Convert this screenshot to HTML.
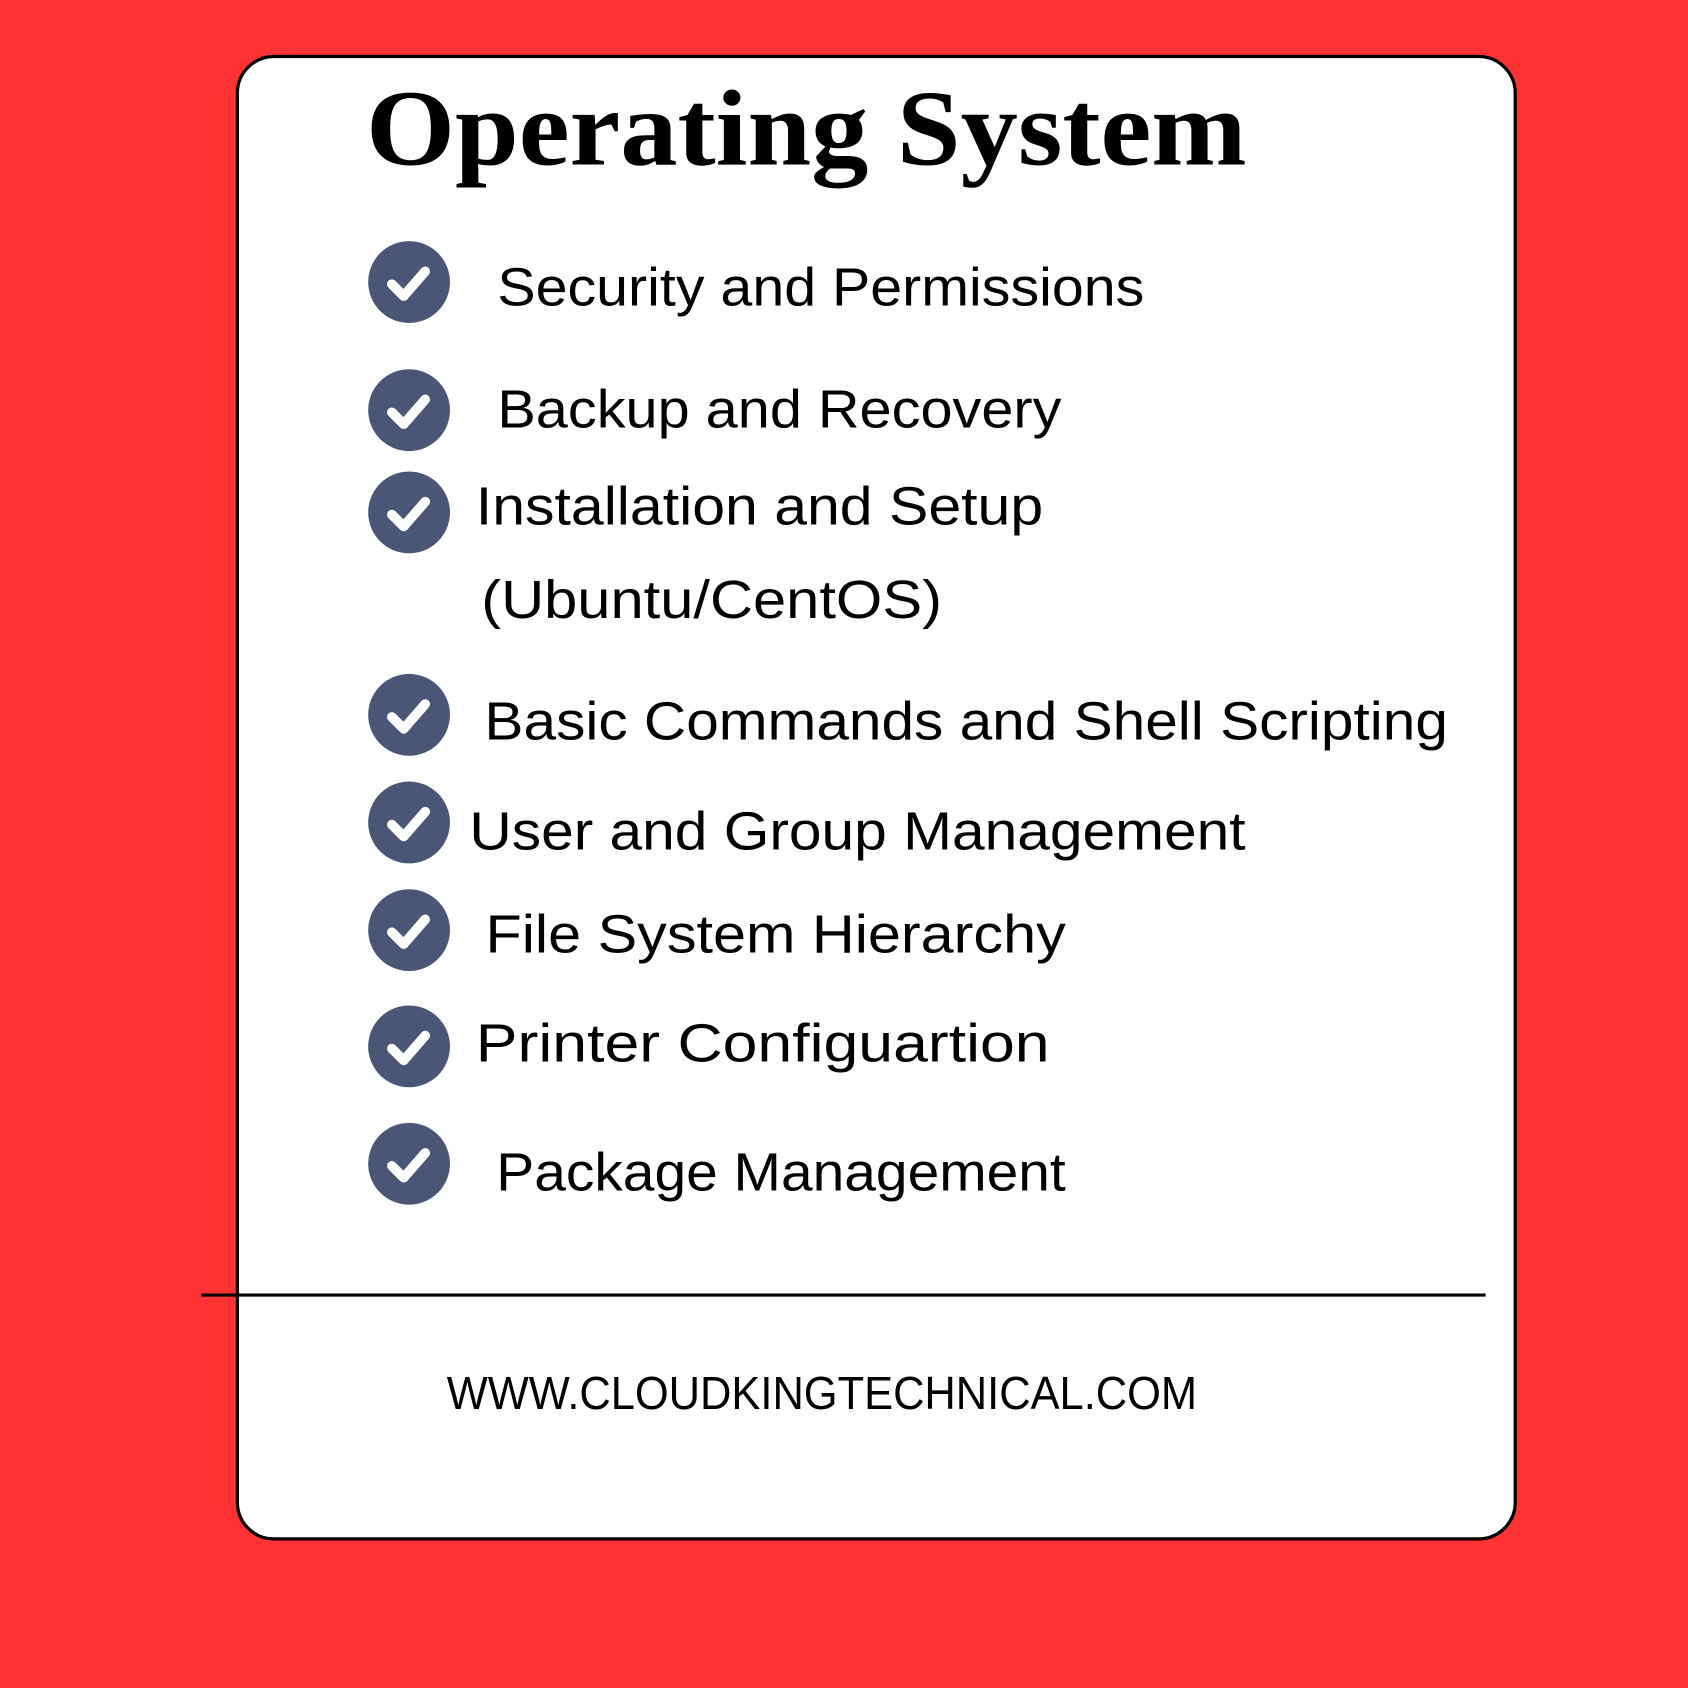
<!DOCTYPE html>
<html><head><meta charset="utf-8"><style>
html,body{margin:0;padding:0;background:#FF3333;}
svg{display:block}
</style></head><body>
<svg width="1688" height="1688" viewBox="0 0 1568 1568" xmlns="http://www.w3.org/2000/svg">
<defs>
<g id="chk"><circle r="38" fill="#4B5676"/><path d="M-16 2 L-5 13 L15 -10" fill="none" stroke="#fff" stroke-width="9" stroke-linecap="round" stroke-linejoin="round"/></g>
</defs>
<rect width="1568" height="1568" fill="#FF3333"/>
<rect x="220.5" y="52.5" width="1187" height="1377" rx="34" fill="#fff" stroke="#000" stroke-width="3"/>
<line x1="187" y1="1203" x2="1380" y2="1203" stroke="#000" stroke-width="3"/>
<text x="340" y="153" font-family="Liberation Serif, serif" font-weight="bold" font-size="100" textLength="818" lengthAdjust="spacingAndGlyphs">Operating System</text>
<g font-family="Liberation Sans, sans-serif" font-size="50" fill="#000">
<use href="#chk" x="380" y="262"/>
<text x="462" y="284" textLength="601" lengthAdjust="spacingAndGlyphs">Security and Permissions</text>
<use href="#chk" x="380" y="381"/>
<text x="462" y="397" textLength="524" lengthAdjust="spacingAndGlyphs">Backup and Recovery</text>
<use href="#chk" x="380" y="476"/>
<text x="442" y="487" textLength="527" lengthAdjust="spacingAndGlyphs">Installation and Setup</text>
<text x="447" y="574" textLength="428" lengthAdjust="spacingAndGlyphs">(Ubuntu/CentOS)</text>
<use href="#chk" x="380" y="664"/>
<text x="450" y="687" textLength="895" lengthAdjust="spacingAndGlyphs">Basic Commands and Shell Scripting</text>
<use href="#chk" x="380" y="764"/>
<text x="436" y="789" textLength="721" lengthAdjust="spacingAndGlyphs">User and Group Management</text>
<use href="#chk" x="380" y="864"/>
<text x="451" y="885" textLength="539" lengthAdjust="spacingAndGlyphs">File System Hierarchy</text>
<use href="#chk" x="380" y="972"/>
<text x="442" y="986" textLength="533" lengthAdjust="spacingAndGlyphs">Printer  Configuartion</text>
<use href="#chk" x="380" y="1081"/>
<text x="461" y="1106" textLength="529" lengthAdjust="spacingAndGlyphs">Package Management</text>
</g>
<text x="415" y="1309" font-family="Liberation Sans, sans-serif" font-size="43" textLength="697" lengthAdjust="spacingAndGlyphs">WWW.CLOUDKINGTECHNICAL.COM</text>
</svg>
</body></html>
